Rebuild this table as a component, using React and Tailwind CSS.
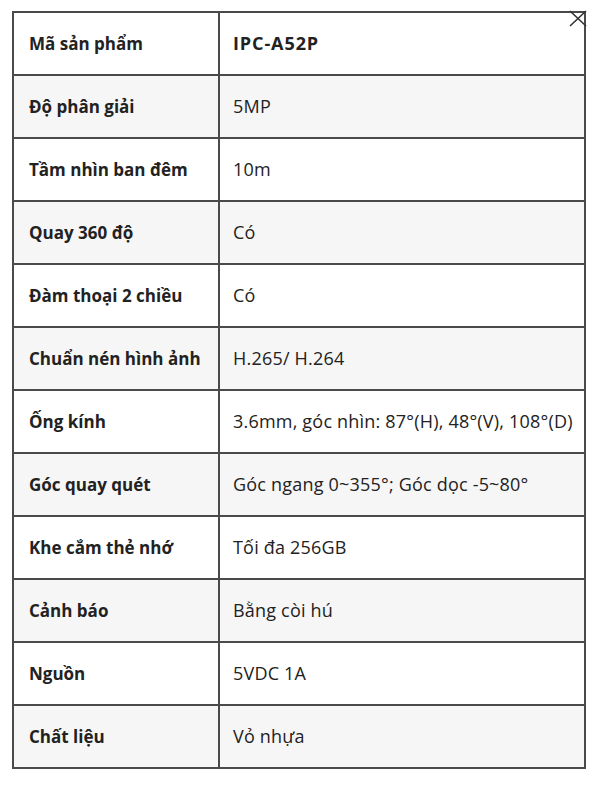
import React from "react";

const rows = [
  ["Mã sản phẩm", "IPC-A52P"],
  ["Độ phân giải", "5MP"],
  ["Tầm nhìn ban đêm", "10m"],
  ["Quay 360 độ", "Có"],
  ["Đàm thoại 2 chiều", "Có"],
  ["Chuẩn nén hình ảnh", "H.265/ H.264"],
  ["Ống kính", "3.6mm, góc nhìn: 87°(H), 48°(V), 108°(D)"],
  ["Góc quay quét", "Góc ngang 0~355°; Góc dọc -5~80°"],
  ["Khe cắm thẻ nhớ", "Tối đa 256GB"],
  ["Cảnh báo", "Bằng còi hú"],
  ["Nguồn", "5VDC 1A"],
  ["Chất liệu", "Vỏ nhựa"],
];

export default function App() {
  return (
    <div className="relative w-[600px] h-[788px] bg-white pt-[11px] pl-[12px]" style={{ fontFamily: "'Open Sans', 'Noto Sans', sans-serif" }}>
      <table className="w-[574px] border-collapse border-2 border-[#4a4a4a] text-[#222]">
        <tbody>
          {rows.map(([k, v], i) => (
            <tr key={i} className={(i % 2 === 1 ? "bg-[#f6f6f6] " : "bg-white ") + "h-[63px]"}>
              <td className="w-[206px] border-2 border-[#4a4a4a] pl-[15px] text-[17px] font-bold align-middle">{k}</td>
              <td className={(i === 0 ? "font-bold text-[18px] tracking-[0.9px] " : "text-[18px] tracking-[0.2px] ") + "border-2 border-[#4a4a4a] pl-[13px] align-middle"}>{v}</td>
            </tr>
          ))}
        </tbody>
      </table>
      <svg className="absolute left-[569px] top-[10px]" width="18" height="17" viewBox="0 0 18 17">
        <path d="M1 1 L17 16 M17 1 L1 16" stroke="#333" strokeWidth="1.6" fill="none" />
      </svg>
    </div>
  );
}
